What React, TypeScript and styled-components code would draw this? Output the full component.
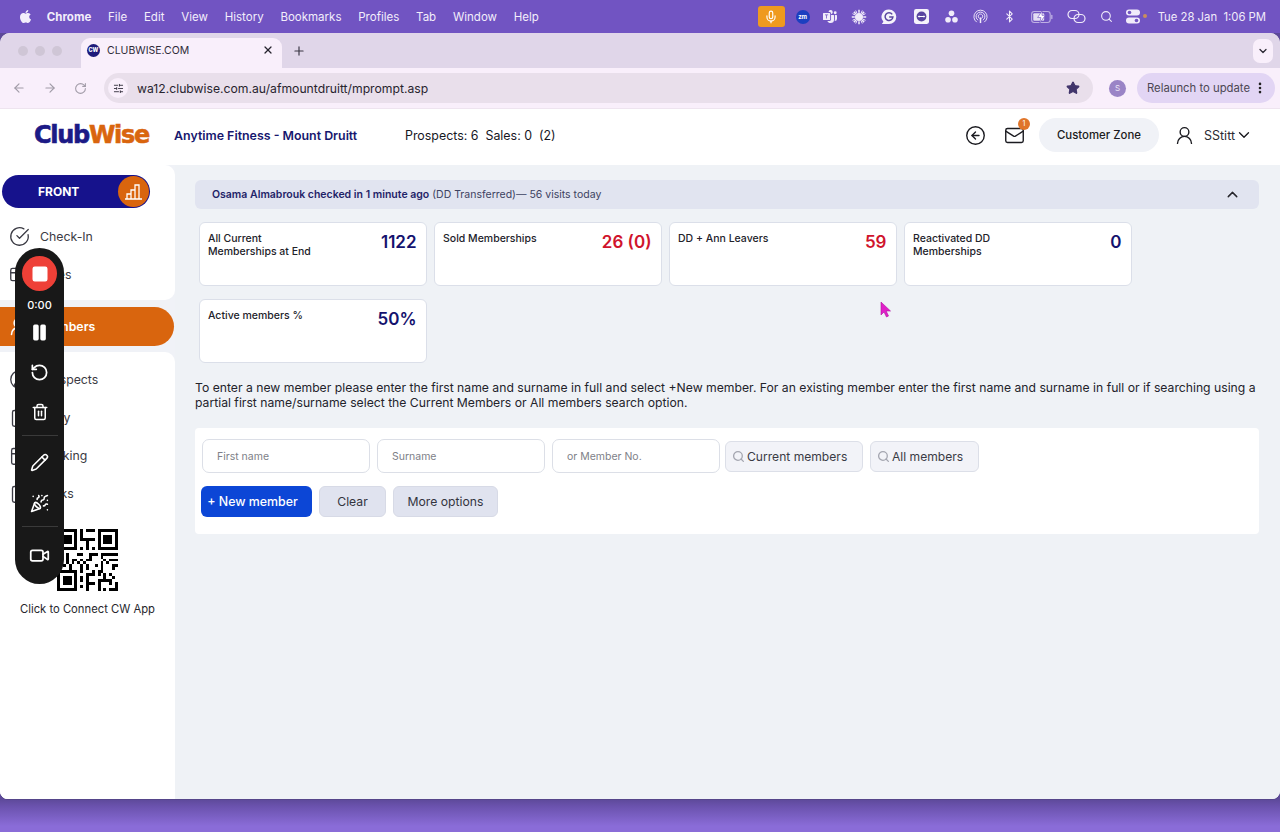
import React from "react";
import styled, { createGlobalStyle } from "styled-components";
import {
  ArrowLeft, ArrowRight, RotateCw, SlidersHorizontal, Star, X, Plus, ChevronDown, ChevronUp,
  CircleArrowLeft, Mail, UserRound, CircleCheckBig, CircleUserRound, Square, Pause, RotateCcw, Trash2, Pencil,
  PartyPopper, Video, Mic, Search, Bluetooth, MoreVertical, Calendar, Clipboard, CreditCard,
} from "lucide-react";
import { FaApple } from "react-icons/fa";
import { BsMicrosoftTeams } from "react-icons/bs";

const Global = createGlobalStyle`
  html, body { margin: 0; padding: 0; width: 1280px; height: 832px; overflow: hidden; }
  body { font-family: Inter, "Liberation Sans", sans-serif; }
  * { box-sizing: border-box; }
`;

const Screen = styled.div`
  position: relative; width: 1280px; height: 832px; display: flex; flex-direction: column; overflow: hidden;
  background: linear-gradient(#5d4999 799px, #6a52ad 806px, #8a6cd8 826px);
`;
const MenuBar = styled.div`
  height: 33px; flex: none; background: #7154c2; color: #f3eefb; display: flex; align-items: center;
  padding: 0 14px 0 18px; font-size: 11.5px;
`;
const AppleMark = styled.span`display: flex; margin-right: -3px;`;
const MenuGroup = styled.div`display: flex; align-items: center; gap: 16.8px;`;
const MenuItem = styled.span<{ $bold?: boolean }>`font-weight: ${p => (p.$bold ? 700 : 400)};`;
const Tray = styled.div`margin-left: auto; display: flex; align-items: center; color: #f1ecfa;`;
const TrayMic = styled.div`
  width: 27px; height: 21px; border-radius: 3px; background: #ef9a1f; display: flex; align-items: center; justify-content: center;
  margin-right: 6px;
`;
const TraySlot = styled.div<{ $w: number }>`width: ${p => p.$w}px; display: flex; justify-content: center; align-items: center;`;
const ControlSlot = styled(TraySlot)`position: relative;`;
const OrangeDot = styled.span`
  position: absolute; right: -2px; top: 5px; width: 4px; height: 4px; border-radius: 50%; background: #c98d5c;
`;
const Zm = styled.div`
  width: 14px; height: 14px; border-radius: 50%; background: #1c3fc0; color: #fff; font-size: 6px; font-weight: 700;
  display: flex; align-items: center; justify-content: center;
`;
const Clock = styled.span`margin-left: 13px; font-size: 11.3px; white-space: nowrap;`;

const Window = styled.div`
  height: 766px; flex: none; display: flex; flex-direction: column; overflow: hidden; border-radius: 10px 10px 8px 8px;
  background: #fff; box-shadow: 0 1px 0 #55458a;
`;
const TabStrip = styled.div`
  height: 35px; flex: none; background: #e0d6e9; display: flex; align-items: flex-end; padding-left: 18px;
`;
const Lights = styled.div`display: flex; gap: 7px; padding-right: 19px; align-self: center;`;
const Light = styled.span`width: 10px; height: 10px; border-radius: 50%; background: #cfc6d6;`;
const Tab = styled.div`
  width: 201px; height: 30px; background: #f9effb; border-radius: 9px 9px 0 0; display: flex; align-items: center;
  padding: 0 8px 6px 6px; gap: 7px; font-size: 10.5px; color: #2f2b38;
`;
const Favicon = styled.span`
  width: 13px; height: 13px; border-radius: 50%; background: #1d1a7a; color: #fff; font-size: 5.5px; font-weight: 800;
  display: flex; align-items: center; justify-content: center; flex: none;
`;
const TabTitle = styled.span`flex: 1;`;
const NewTab = styled.span`display: flex; margin-left: 10px; color: #3a3644; align-self: center;`;
const TabMenu = styled.span`
  margin: 0 7px 0 auto; align-self: center; width: 20px; height: 24px; background: #f9effb; border-radius: 7px; color: #2b2833;
  display: flex; align-items: center; justify-content: center;
`;
const Toolbar = styled.div`
  height: 41px; flex: none; background: #f9effb; border-bottom: 1px solid #eee4ef; display: flex; align-items: center; padding: 0 4px 0 12px;
`;
const NavIcons = styled.div`display: flex; align-items: center; gap: 17px; color: #a29ca8;`;
const Omnibox = styled.div`
  margin-left: 17px; width: 989px; height: 30px; border-radius: 15px; background: #e9dfeb; display: flex; align-items: center; padding: 0 13px 0 4px;
  color: #28242e; font-size: 12.2px;
`;
const SiteChip = styled.span`
  width: 20px; height: 20px; background: #f9effb; border-radius: 50%; display: flex; align-items: center; justify-content: center; margin-right: 9px;
`;
const OmniStar = styled.span`margin-left: auto; display: flex; color: #41356b;`;
const Avatar = styled.span`
  margin-left: 16px; width: 17px; height: 17px; border-radius: 50%; background: #9a84c6; color: #ece5f6; font-size: 8px;
  display: flex; align-items: center; justify-content: center; flex: none;
`;
const Relaunch = styled.div`
  margin-left: 11px; width: 138px; height: 30px; border-radius: 15px; background: #e2d5f4; color: #4c4753; font-size: 11.3px;
  display: flex; align-items: center; padding-left: 10px; gap: 3px; white-space: nowrap;
`;

const AppHeader = styled.header`
  height: 56px; flex: none; background: #fff; display: flex; align-items: center; padding: 0 27px 4px 34px;
`;
const Logo = styled.div`
  font-family: "DejaVu Sans", sans-serif; font-weight: 700; font-size: 24px; letter-spacing: -1.3px; width: 140px; color: #1c1a86;
  -webkit-text-stroke: 0.6px currentColor;
`;
const LogoAccent = styled.span`color: #d9650e;`;
const ClubName = styled.div`font-size: 12.4px; font-weight: 600; color: #17176e; width: 231px;`;
const Stats = styled.div`display: flex; gap: 7px; font-size: 12.4px; color: #17171f; white-space: pre;`;
const HeaderRight = styled.div`margin-left: auto; display: flex; align-items: center; color: #1b1b20;`;
const MailWrap = styled.div`position: relative; display: flex; margin-left: 18px;`;
const Badge = styled.span`
  position: absolute; top: -7px; right: -5px; width: 12px; height: 12px; border-radius: 50%; background: #e0752a; color: #fff;
  font-size: 7px; display: flex; align-items: center; justify-content: center;
`;
const ZoneButton = styled.div`
  margin-left: 14px; width: 120px; height: 34px; border-radius: 17px; background: #f0f2f7; font-size: 11.4px; font-weight: 550;
  display: flex; align-items: center; justify-content: center;
`;
const UserName = styled.span`font-size: 12.5px; color: #2b2b33; margin-left: 9px;`;
const UserIcon = styled.span`display: flex; margin-left: 15px;`;

const Body = styled.div`flex: 1; display: flex; min-height: 0;`;
const Sidebar = styled.aside`width: 175px; flex: none; background: #f0f2f7; display: flex; flex-direction: column;`;
const SideTop = styled.div`
  height: 135px; flex: none; background: #fff; border-radius: 0 10px 10px 0; padding: 10px 0 0 2px;
`;
const FrontPill = styled.div`
  width: 148px; height: 33px; border-radius: 17px; background: #16128c; color: #fff; font-size: 12px; font-weight: 700;
  display: flex; align-items: center; position: relative; padding-left: 36px;
`;
const FrontKnob = styled.span`
  position: absolute; right: 1px; top: 1px; width: 31px; height: 31px; border-radius: 50%; background: #d9650e;
  display: flex; align-items: center; justify-content: center;
`;
const NavItem = styled.div`
  height: 38.1px; display: flex; align-items: center; gap: 10px; padding-left: 9px; color: #3b3b44; font-size: 12.3px;
  & svg { flex: none; }
`;
const NavList = styled.div`margin: 9px 0 0 -2px;`;
const ActiveRow = styled.div`
  height: 39px; margin-top: 7px; flex: none; width: 174px; border-radius: 0 20px 20px 0; background: #d9650e; color: #fff; font-size: 12.3px; font-weight: 600;
  display: flex; align-items: center; gap: 10px; padding-left: 8px;
  & svg { flex: none; }
`;
const SideBottom = styled.div`
  flex: 1; margin-top: 6px; background: #fff; border-radius: 0 10px 0 0; padding-top: 8px; display: flex; flex-direction: column;
`;
const QrBlock = styled.div`display: flex; flex-direction: column; align-items: center; margin-top: 17px; gap: 11px; font-size: 11.25px; color: #26262c;`;

const Main = styled.main`flex: 1; background: #eff2f6; padding: 15px 21px 0 20px; min-width: 0;`;
const Banner = styled.div`
  height: 29px; border-radius: 6px; background: #e1e4f0; display: flex; align-items: center; padding: 0 18px 0 17px; font-size: 10.5px; color: #3d4261;
`;
const BannerName = styled.strong`font-weight: 600; color: #1f2368; margin-right: 3px;`;
const BannerToggle = styled.span`margin-left: auto; display: flex; color: #26262c;`;
const Cards = styled.div`
  display: grid; grid-template-columns: repeat(4, 227.5px); grid-auto-rows: 64px; column-gap: 7.5px; row-gap: 13px; margin: 13px 0 0 4px;
`;
const Card = styled.div`
  background: #fff; border: 1px solid #dbdfe9; border-radius: 6px; padding: 9px 9px 0 9px; display: flex; justify-content: space-between;
`;
const CardLabel = styled.div`font-size: 10.5px; line-height: 12.6px; color: #22222a; width: 120px; font-weight: 450; margin-left: -1px; padding-top: 1px;`;
const CardValue = styled.div<{ $red?: boolean }>`
  font-size: 17px; line-height: 20px; font-weight: 600; color: ${p => (p.$red ? "#d0142c" : "#14126e")};
`;
const Hint = styled.p`
  margin: 17px 0 0 0; font-size: 12.2px; line-height: 15px; color: #23232b; width: 1064px;
`;
const SearchPanel = styled.section`
  margin-top: 18px; height: 106px; background: #fff; border-radius: 4px; padding: 11px 6px 0 7px;
`;
const SearchRow = styled.div`display: flex; align-items: center; gap: 7px;`;
const NameInput = styled.input`
  width: 168px; height: 34px; border: 1px solid #dcdfe7; border-radius: 7px; background: #fff; padding: 0 14px; font: 400 10.5px Inter, sans-serif; outline: none;
  &::placeholder { color: #7e7f88; opacity: 1; }
`;
const SearchButton = styled.div<{ $w: number; $pull?: number }>`
  width: ${p => p.$w}px; height: 31px; border: 1px solid #dcdfe8; border-radius: 6px; background: #f2f3f8; color: #3a3b45; font-size: 12.1px;
  display: flex; align-items: center; padding-left: 6px; gap: 2px; margin-left: ${p => p.$pull ?? 0}px;
`;
const ActionRow = styled.div`display: flex; gap: 7px; margin-top: 13px;`;
const PrimaryButton = styled.div`
  width: 111px; height: 31px; border-radius: 6px; background: #0c46d6; color: #fff; font-size: 12.4px; font-weight: 500;
  display: flex; align-items: center; justify-content: center; gap: 3px; margin-left: -1px; padding-right: 8px;
`;
const SecondaryButton = styled.div<{ $w: number }>`
  width: ${p => p.$w}px; height: 31px; border-radius: 6px; border: 1px solid #d7dae6; background: #e0e3ef; color: #33343e; font-size: 12.2px;
  display: flex; align-items: center; justify-content: center;
`;

const Recorder = styled.div`
  position: absolute; left: 15px; top: 248px; width: 49px; height: 336px; border-radius: 25px; background: #181818; color: #fff;
  display: flex; flex-direction: column; align-items: center; padding-top: 8px;
`;
const RecordButton = styled.div`
  width: 35px; height: 35px; border-radius: 50%; background: #ee4037; display: flex; align-items: center; justify-content: center; flex: none;
`;
const RecordTime = styled.div`font-size: 11px; font-weight: 500; margin-top: 7px; height: 15px; line-height: 15px;`;
const RecIcon = styled.div<{ $top: number }>`display: flex; margin-top: ${p => p.$top}px;`;
const RecRule = styled.div<{ $top: number }>`width: 36px; height: 1px; background: #3a3a3a; margin-top: ${p => p.$top}px; flex: none;`;

const Cursor = styled.svg`position: absolute; left: 880px; top: 301px;`;

const qr = [
  "1111111.1.111.1111111",
  "1.....1.1.....1.....1",
  "1.111.1.1.....1.111.1",
  "1.111.1.11111.1.111.1",
  "1.111.1...1...1.111.1",
  "1.....1...1...1.....1",
  "1111111.1.1.1.1111111",
  ".....................",
  "11.1...11..111.111111",
  "...1.......1...1.....",
  "11.1.11.1.11....1.111",
  "...1.1.1.1.....1.1...",
  "1.1.1...1.1..1.1...11",
  "....1...1.1....1...1.",
  "1111111.1...1.11.....",
  "1.....1...111.1.1.1..",
  "1.111.1.1.1.....1..1.",
  "1.111.1.1.1...11111..",
  "1.111.1...111.1...1.1",
  "1.....1.1.1...1.....1",
  "1111111...1...1.1.111",
];

const QrCode = () => (
  <svg width="61" height="62" viewBox="0 0 21 21" preserveAspectRatio="none" shapeRendering="crispEdges">
    {qr.flatMap((row, y) =>
      row.split("").map((c, x) => (c === "1" ? <rect key={`${x}-${y}`} x={x} y={y} width="1" height="1" fill="#000" /> : null))
    )}
  </svg>
);

const BarsIcon = () => (
  <svg width="19" height="19" viewBox="0 0 19 19" fill="none" stroke="#fff" strokeWidth="1.3">
    <path d="M1 17h17M3 17v-5h4v5M7 17V8h4v9M11 17V3h4v14" />
  </svg>
);
const AirDrop = () => (
  <svg width="15" height="15" viewBox="0 0 16 16" fill="none" stroke="currentColor" strokeWidth="1">
    <path d="M4 14a7 7 0 1 1 8 0M5.500 12a4.700 4.700 0 1 1 5 0M7 10a2.400 2.400 0 1 1 2 0" />
    <path d="M8 9v6" strokeWidth="1.6" />
  </svg>
);
const Battery = () => (
  <svg width="22" height="12" viewBox="0 0 20 11">
    <rect x=".5" y=".5" width="17" height="10" rx="2.5" fill="none" stroke="currentColor" opacity=".6" />
    <rect x="2" y="2" width="10" height="7" rx="1" fill="currentColor" opacity=".9" />
    <path d="M10 0 6 6h3l-1 5 5-7H10z" fill="#fff" stroke="#7154c2" strokeWidth=".6" />
    <rect x="18.400" y="3.500" width="1.200" height="4" rx=".6" fill="currentColor" opacity=".6" />
  </svg>
);
const Asana = () => (
  <svg width="13" height="13" viewBox="0 0 12 12" fill="currentColor">
    <circle cx="6" cy="3" r="2.600" /><circle cx="2.800" cy="9" r="2.600" /><circle cx="9.200" cy="9" r="2.600" />
  </svg>
);
const Grammarly = () => (
  <svg width="16" height="16" viewBox="0 0 16 16">
    <path d="M8 .5a7.300 7.300 0 1 1 0 14.600H.8l1.600-2.400A7.300 7.300 0 0 1 8 .5z" fill="#f6f3fb" />
    <path d="M11.200 5.400A3.900 3.900 0 1 0 11.900 8H8.200" fill="none" stroke="#5a45a0" strokeWidth="1.5" />
  </svg>
);
const TeamViewer = () => (
  <svg width="15" height="15" viewBox="0 0 14 14">
    <rect width="14" height="14" rx="2" fill="#f6f3fb" />
    <circle cx="7" cy="7" r="4.600" fill="#5a45a0" />
    <path d="M3.500 7 5 5.800v.8h4v-.8L10.500 7 9 8.200v-.8H5v.8z" fill="#fff" />
  </svg>
);
const ControlCenter = () => (
  <svg width="14" height="15" viewBox="0 0 14 15" fill="currentColor">
    <rect y=".5" width="14" height="6" rx="3" />
    <rect y="8.500" width="14" height="6" rx="3" />
    <circle cx="3.500" cy="3.500" r="1.800" fill="#7154c2" />
    <circle cx="10.500" cy="11.500" r="1.800" fill="#7154c2" />
  </svg>
);
const Flower = () => (
  <svg width="16" height="16" viewBox="0 0 16 16" fill="none" stroke="currentColor">
    <circle cx="8" cy="8" r="3.600" fill="currentColor" />
    <path strokeWidth="1.500" d="M8 .8v3M8 12.200v3M.8 8h3M12.200 8h3M2.900 2.900 5 5M11 11l2.100 2.100M13.100 2.900 11 5M5 11l-2.100 2.100" />
    <path strokeWidth="1" d="M4.700 1.500 6 4.400M10 11.600l1.300 2.900M1.500 4.700 4.400 6M11.600 10l2.900 1.300M11.300 1.500 10 4.400M6 11.600l-1.300 2.900M14.500 4.700 11.600 6M4.400 10l-2.900 1.300" />
  </svg>
);
const LinkLoops = () => (
  <svg width="19" height="15" viewBox="0 0 19 15" fill="none" stroke="currentColor" strokeWidth="1.200">
    <rect x="1" y="1.500" width="11" height="8" rx="4" />
    <rect x="7" y="5.500" width="11" height="8" rx="4" />
  </svg>
);

export default function App() {
  return (
    <Screen>
      <Global />
      <MenuBar>
        <MenuGroup>
          <AppleMark><FaApple size={15} /></AppleMark>
          <MenuItem $bold>Chrome</MenuItem>
          {["File", "Edit", "View", "History", "Bookmarks", "Profiles", "Tab", "Window", "Help"].map(m => (
            <MenuItem key={m}>{m}</MenuItem>
          ))}
        </MenuGroup>
        <Tray>
          <TrayMic><Mic size={14} color="#fff" /></TrayMic>
          <TraySlot $w={24}><Zm>zm</Zm></TraySlot>
          <TraySlot $w={30}><BsMicrosoftTeams size={14} /></TraySlot>
          <TraySlot $w={28}><Flower /></TraySlot>
          <TraySlot $w={32}><Grammarly /></TraySlot>
          <TraySlot $w={34}><TeamViewer /></TraySlot>
          <TraySlot $w={26}><Asana /></TraySlot>
          <TraySlot $w={32}><AirDrop /></TraySlot>
          <TraySlot $w={26}><Bluetooth size={13} /></TraySlot>
          <TraySlot $w={38}><Battery /></TraySlot>
          <TraySlot $w={32}><LinkLoops /></TraySlot>
          <TraySlot $w={28}><Search size={13} /></TraySlot>
          <ControlSlot $w={24}><ControlCenter /><OrangeDot /></ControlSlot>
          <Clock>Tue 28 Jan&nbsp;&nbsp;1:06 PM</Clock>
        </Tray>
      </MenuBar>
      <Window>
        <TabStrip>
          <Lights><Light /><Light /><Light /></Lights>
          <Tab>
            <Favicon>CW</Favicon>
            <TabTitle>CLUBWISE.COM</TabTitle>
            <X size={12} color="#26232d" strokeWidth={2.5} />
          </Tab>
          <NewTab><Plus size={14} /></NewTab>
          <TabMenu><ChevronDown size={12} strokeWidth={2.5} /></TabMenu>
        </TabStrip>
        <Toolbar>
          <NavIcons>
            <ArrowLeft size={14} />
            <ArrowRight size={14} />
            <RotateCw size={13} />
          </NavIcons>
          <Omnibox>
            <SiteChip><SlidersHorizontal size={11} color="#36323f" /></SiteChip>
            wa12.clubwise.com.au/afmountdruitt/mprompt.asp
            <OmniStar><Star size={14} fill="currentColor" /></OmniStar>
          </Omnibox>
          <Avatar>S</Avatar>
          <Relaunch>Relaunch to update<MoreVertical size={14} color="#222" strokeWidth={2.5} /></Relaunch>
        </Toolbar>
        <AppHeader>
          <Logo>Club<LogoAccent>Wise</LogoAccent></Logo>
          <ClubName>Anytime Fitness - Mount Druitt</ClubName>
          <Stats><span>Prospects: 6</span><span>Sales: 0  (2)</span></Stats>
          <HeaderRight>
            <CircleArrowLeft size={21} strokeWidth={1.6} />
            <MailWrap>
              <Mail size={21} strokeWidth={1.6} />
              <Badge>1</Badge>
            </MailWrap>
            <ZoneButton>Customer Zone</ZoneButton>
            <UserIcon><UserRound size={21} strokeWidth={1.6} /></UserIcon>
            <UserName>SStitt</UserName>
            <ChevronDown size={18} strokeWidth={1.8} />
          </HeaderRight>
        </AppHeader>
        <Body>
          <Sidebar>
            <SideTop>
              <FrontPill>
                FRONT
                <FrontKnob><BarsIcon /></FrontKnob>
              </FrontPill>
              <NavList>
                <NavItem><CircleCheckBig size={21} strokeWidth={1.5} />Check-In</NavItem>
                <NavItem><CreditCard size={21} strokeWidth={1.5} />Sales</NavItem>
              </NavList>
            </SideTop>
            <ActiveRow><UserRound size={21} strokeWidth={1.8} />Members</ActiveRow>
            <SideBottom>
              <NavItem><CircleUserRound size={21} strokeWidth={1.5} />Prospects</NavItem>
              <NavItem><Clipboard size={21} strokeWidth={1.5} />Diary</NavItem>
              <NavItem><Calendar size={21} strokeWidth={1.5} />Booking</NavItem>
              <NavItem><Clipboard size={21} strokeWidth={1.5} />Tasks</NavItem>
              <QrBlock>
                <QrCode />
                Click to Connect CW App
              </QrBlock>
            </SideBottom>
          </Sidebar>
          <Main>
            <Banner>
              <BannerName>Osama Almabrouk checked in 1 minute ago</BannerName>
              (DD Transferred)— 56 visits today
              <BannerToggle><ChevronUp size={17} /></BannerToggle>
            </Banner>
            <Cards>
              <Card><CardLabel>All Current Memberships at End</CardLabel><CardValue>1122</CardValue></Card>
              <Card><CardLabel>Sold Memberships</CardLabel><CardValue $red>26 (0)</CardValue></Card>
              <Card><CardLabel>DD + Ann Leavers</CardLabel><CardValue $red>59</CardValue></Card>
              <Card><CardLabel>Reactivated DD Memberships</CardLabel><CardValue>0</CardValue></Card>
              <Card><CardLabel>Active members %</CardLabel><CardValue>50%</CardValue></Card>
            </Cards>
            <Hint>
              To enter a new member please enter the first name and surname in full and select +New member. For an existing member enter the first name and surname in full or if searching using a partial first name/surname select the Current Members or All members search option.
            </Hint>
            <SearchPanel>
              <SearchRow>
                <NameInput placeholder="First name" />
                <NameInput placeholder="Surname" />
                <NameInput placeholder="or Member No." />
                <SearchButton $w={138} $pull={-2}><Search size={13} color="#a4a6b0" strokeWidth={2.4} />Current members</SearchButton>
                <SearchButton $w={109}><Search size={13} color="#a4a6b0" strokeWidth={2.4} />All members</SearchButton>
              </SearchRow>
              <ActionRow>
                <PrimaryButton>+ New member</PrimaryButton>
                <SecondaryButton $w={67}>Clear</SecondaryButton>
                <SecondaryButton $w={105}>More options</SecondaryButton>
              </ActionRow>
            </SearchPanel>
          </Main>
        </Body>
      </Window>
      <Recorder>
        <RecordButton><Square size={18} fill="#fff" color="#fff" /></RecordButton>
        <RecordTime>0:00</RecordTime>
        <RecIcon $top={10}><Pause size={19} fill="#fff" /></RecIcon>
        <RecIcon $top={21}><RotateCcw size={19} strokeWidth={2.2} /></RecIcon>
        <RecIcon $top={21}><Trash2 size={18} /></RecIcon>
        <RecRule $top={14} />
        <RecIcon $top={17}><Pencil size={19} /></RecIcon>
        <RecIcon $top={22}><PartyPopper size={19} /></RecIcon>
        <RecRule $top={13} />
        <RecIcon $top={18}><Video size={21} /></RecIcon>
      </Recorder>
      <Cursor width="12" height="18" viewBox="0 0 12 18">
        <path d="M1 1v13l3-3 2.500 5 2-1-2.300-5H10.500z" fill="#e020c8" stroke="#b014a0" strokeWidth=".6" />
      </Cursor>
    </Screen>
  );
}
